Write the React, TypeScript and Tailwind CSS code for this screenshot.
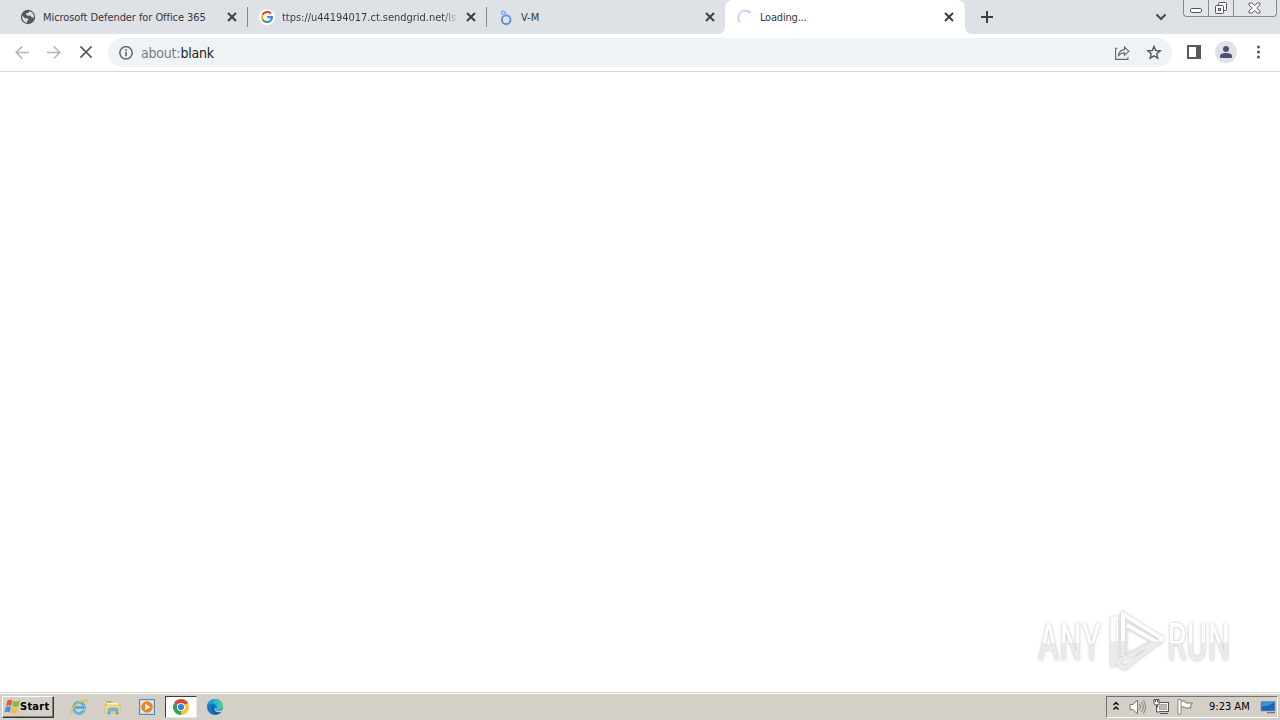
import type { ReactNode } from "react";

function Cross({ size = 10, stroke = 2, color = "#3c4043" }: { size?: number; stroke?: number; color?: string }) {
  return (
    <svg width={size} height={size} viewBox="0 0 10 10" className="shrink-0">
      <path d="M1 1L9 9M9 1L1 9" stroke={color} strokeWidth={stroke} fill="none" />
    </svg>
  );
}

function Globe() {
  return (
    <svg width="16" height="16" viewBox="0 0 16 16">
      <circle cx="8" cy="8" r="7.2" fill="#565a60" />
      <path d="M2.2 6.5L5 9.2l2.6.4 1 1.2-1.6 1.3v1.7C4 13.4 2 10.8 2.2 6.5zM9.5 2.2L8.2 4H6.3v2l1.5.7 2.6-.3 1.2 1.8 2.2.6C14.4 5.7 12.5 3 9.5 2.2z" fill="#dee1e6" />
    </svg>
  );
}

function Google() {
  return (
    <svg width="16" height="16" viewBox="0 0 16 16">
      <circle cx="8" cy="8" r="8" fill="#fff" />
      <g fill="none" strokeWidth="2.1">
        <path d="M11.9 4.6A5 5 0 0 0 3.6 5.8" stroke="#ea4335" />
        <path d="M3.6 5.7A5 5 0 0 0 3.7 10.5" stroke="#fbbc05" />
        <path d="M3.6 10.4A5 5 0 0 0 11.3 11.8" stroke="#34a853" />
        <path d="M11.2 11.9A5 5 0 0 0 13 8.1H8.2" stroke="#4285f4" />
      </g>
    </svg>
  );
}

function Rings() {
  return (
    <svg width="16" height="16" viewBox="0 0 16 16" fill="none">
      <circle cx="8.2" cy="10.7" r="4.3" stroke="#5b8ede" strokeWidth="1.9" />
      <circle cx="5" cy="3.8" r="1.7" stroke="#82aae9" strokeWidth="1.2" />
      <path d="M6.7 3.5Q8.8 4.2 8.5 6.5" stroke="#82aae9" strokeWidth="1.1" />
    </svg>
  );
}

function Spinner() {
  return (
    <svg width="16" height="16" viewBox="0 0 16 16" fill="none">
      <path d="M2.9 13.4A7 7 0 1 1 13.7 4.2" stroke="#c3d3f3" strokeWidth="1.8" />
    </svg>
  );
}

function Tab({ icon, children, active = false, divider = false }: { icon: ReactNode; children: ReactNode; active?: boolean; divider?: boolean }) {
  return (
    <div className={active ? "relative flex h-[34px] w-[240px] items-center rounded-t-[8px] bg-white pl-3" : "relative flex h-[34px] w-[239px] items-center pl-3"}>
      <span className="h-4 w-4 shrink-0">{icon}</span>
      <span className="ml-[7px] w-[175px] overflow-hidden whitespace-nowrap pt-px text-[11px] leading-4 text-[#35383c]">{children}</span>
      <span className="ml-[9px] flex"><Cross /></span>
      {divider && <span className="absolute right-[-1px] top-[7px] h-5 w-px bg-[#85898f]" />}
      {active && (
        <>
          <svg className="absolute bottom-0 left-[-8px]" width="8" height="8"><path d="M8 0V8H0Q8 8 8 0" fill="#fff" /></svg>
          <svg className="absolute bottom-0 right-[-8px]" width="8" height="8"><path d="M0 0V8H8Q0 8 0 0" fill="#fff" /></svg>
        </>
      )}
    </div>
  );
}

function WindowButtons() {
  return (
    <div className="flex h-[17px] w-[94px] rounded-b-[4px] border border-t-0 border-[#858990] bg-[#e2e5ea]">
      <div className="flex w-[25px] justify-center border-r border-[#858990] pt-[8px]">
        <svg width="12" height="5"><rect x=".5" y=".5" width="11" height="4" rx="1.2" fill="#fff" stroke="#53565c" /></svg>
      </div>
      <div className="flex w-[25px] justify-center border-r border-[#858990] pt-[1px]">
        <svg width="14" height="14" viewBox="0 0 14 14" fill="#f5f6f7" stroke="#53565c">
          <rect x="4.5" y="1.5" width="8" height="8" rx="1" />
          <rect x="1.5" y="4.5" width="8" height="8" rx="1" />
          <rect x="4.5" y="7.5" width="2" height="2" />
        </svg>
      </div>
      <div className="flex flex-1 justify-center pr-[2px] pt-[2px]">
        <svg width="13" height="12" viewBox="0 0 13 12"><path d="M1 1h3l2.5 2.7L9 1h3v2L8.7 6 12 9v2H9L6.5 8.3 4 11H1V9l3.3-3L1 3z" fill="#fff" stroke="#5e6167" /></svg>
      </div>
    </div>
  );
}

function TabStrip() {
  return (
    <header className="flex h-[34px] bg-[#dee1e6] pl-2">
      <Tab icon={<Globe />} divider><span className="tracking-[-0.07px]">Microsoft Defender for Office 365</span></Tab>
      <Tab icon={<Google />} divider>
        <span className="bg-gradient-to-r from-[#35383c] from-[160px] to-[#c8cbd0] to-[175px] bg-clip-text tracking-[-0.03px] text-transparent">ttps://u44194017.ct.sendgrid.net/ls</span>
      </Tab>
      <Tab icon={<Rings />}>V-M</Tab>
      <Tab icon={<Spinner />} active><span className="tracking-[-0.2px]">Loading...</span></Tab>
      <svg className="ml-4 mt-[11px]" width="12" height="12"><path d="M6 0V12M0 6H12" stroke="#3c4043" strokeWidth="2" /></svg>
      <div className="flex-1" />
      <svg className="mr-[17px] mt-[13px]" width="11" height="8"><path d="M1.5 1.5L6 6 10.5 1.5" fill="none" stroke="#44484d" strokeWidth="2" /></svg>
      <WindowButtons />
      <div className="w-[3px]" />
    </header>
  );
}

function Arrow({ flip = false }: { flip?: boolean }) {
  return (
    <svg width="14" height="14" viewBox="0 0 14 14" className={flip ? "-scale-x-100" : ""}>
      <path d="M14 6.5H1.5M7.2 .5L1.2 6.5l6 6" fill="none" stroke="#b5b7ba" strokeWidth="1.7" />
    </svg>
  );
}

function Toolbar() {
  return (
    <div className="flex h-[38px] items-center border-b border-[#d5d7da] bg-white pl-[15px] pr-[14px]">
      <Arrow />
      <span className="ml-[18px]"><Arrow flip /></span>
      <span className="ml-[18px] pb-px"><Cross size={14} stroke={1.2} color="#55595e" /></span>
      <div className="ml-[15px] flex h-[29px] w-[1064px] items-center rounded-full bg-[#f0f3f5] pl-[11px] pr-[10px]">
        <svg width="14" height="14" viewBox="0 0 14 14"><circle cx="7" cy="6.8" r="6.2" fill="none" stroke="#5f6368" strokeWidth="1.5" /><path d="M7 6V10.3M7 3.3V4.9" stroke="#5f6368" strokeWidth="1.6" /></svg>
        <span className="ml-2 flex-1 text-[14px] leading-5 tracking-[-0.2px] text-[#777b80]">about:<span className="text-[#202124]">blank</span></span>
        <svg width="16" height="16" viewBox="0 0 16 16" fill="none" stroke="#63676c" strokeWidth="1.1">
          <path d="M3.5 3.2H1.6v11.2h12.3v-2.4" />
          <path d="M4.5 10.5C5 7 7.2 4.8 10.500 4.600V2.100L14.800 6.200 10.500 10.300V7.900C8 7.800 6.200 8.700 4.500 10.500z" />
        </svg>
        <svg className="ml-4" width="16" height="16" viewBox="0 0 16 16"><path d="M8 1.400l1.700 4.100 4.500.4-3.400 2.900 1 4.400L8 10.900l-3.800 2.300 1-4.400-3.400-2.900 4.500-.4z" fill="none" stroke="#55595e" strokeWidth="1.4" /></svg>
      </div>
      <svg className="mb-px ml-[15px]" width="14" height="14"><rect x="1" y="1" width="12" height="12" fill="#fff" stroke="#55585c" strokeWidth="2" /><rect x="9" width="5" height="14" fill="#55585c" /></svg>
      <svg className="mb-px ml-[14px]" width="22" height="22" viewBox="0 0 22 22"><circle cx="11" cy="11" r="11" fill="#dee1e6" /><circle cx="11" cy="8" r="3" fill="#49536d" /><path d="M5 16v-1.300C5 12.700 9 12 11 12s6 .7 6 2.700V16q0 1-1 1H6q-1 0-1-1" fill="#49536d" /></svg>
      <svg className="mb-px ml-[19px]" width="4" height="14" fill="#55595e"><circle cx="2.5" cy="2" r="1.5" /><circle cx="2.5" cy="7" r="1.5" /><circle cx="2.5" cy="12" r="1.5" /></svg>
    </div>
  );
}

function Watermark() {
  return (
    <div className="absolute left-[1036px] top-[607px] h-[68px] w-[200px] font-['Roboto',sans-serif] text-[51px] leading-[68px] drop-shadow-[0_0_1.5px_#bdbdbd]">
      <span className="absolute left-[2px] top-[1.5px] origin-left scale-x-[0.725] whitespace-nowrap bg-gradient-to-b from-white from-50% to-[#ebebeb] to-50% bg-clip-text text-transparent">ANY</span>
      <svg className="absolute left-[72px] top-px" width="58" height="68" viewBox="0 0 58 68">
        <defs>
          <linearGradient id="play-fill" gradientUnits="userSpaceOnUse" x1="0" y1="0" x2="0" y2="68">
            <stop offset=".48" stopColor="#fff" /><stop offset=".48" stopColor="#ebebeb" />
          </linearGradient>
        </defs>
        <path d="M4 10.500h4v44L46 34.500" fill="none" stroke="url(#play-fill)" strokeWidth="4" />
        <path d="M4.500 9v50" fill="none" stroke="url(#play-fill)" strokeWidth="4" />
        <path d="M15 48V6L54 30.500 51 35 19 17" fill="none" stroke="url(#play-fill)" strokeWidth="4" />
        <path d="M54 31L17 60l-7-4" fill="none" stroke="url(#play-fill)" strokeWidth="4" />
        <path d="M8 12v43M12.500 4v45M17.500 12L51 33M19 21v25L43 34z" fill="none" stroke="#e2e2e2" strokeWidth=".8" />
      </svg>
      <span className="absolute left-[131px] top-[1.500px] origin-left scale-x-[0.725] whitespace-nowrap bg-gradient-to-b from-white from-50% to-[#ebebeb] to-50% bg-clip-text text-transparent">RUN</span>
    </div>
  );
}

function WindowsFlag() {
  return (
    <svg width="17" height="17" viewBox="0 0 17 17" className="shrink-0">
      <path d="M3.5 2.5Q6 .8 8.500 2.500L7.200 8Q4.800 6.400 2 8z" fill="#e5602a" />
      <path d="M9.500 3Q12.500 4.500 16 2.300L14.500 8Q11.500 9.800 8.300 8.200z" fill="#84b847" />
      <path d="M1.800 9Q4.500 7.500 7 9.200L5.700 14.500Q3.200 12.800.4 14.500z" fill="#4e8ed4" />
      <path d="M8 9.500Q11 11 14.200 9l-1.500 5.700Q9.800 16.500 6.700 14.800z" fill="#f4be38" />
    </svg>
  );
}

function IEIcon() {
  return (
    <svg width="18" height="18" viewBox="0 0 18 18" fill="none">
      <path d="M14.200 12.100A5.500 5.500 0 1 1 14.600 9.500H5" stroke="#40a8df" strokeWidth="2.7" />
      <path d="M14.200 12.100A5.500 5.500 0 1 1 14.600 9.500" stroke="#83cff0" strokeWidth=".8" />
      <path d="M2.700 15.500C-.5 15 3 8.500 8 5s10-4.600 8.200-.6" stroke="#edbd3c" strokeWidth="1.5" />
    </svg>
  );
}

function FolderIcon() {
  return (
    <svg width="18" height="18" viewBox="0 0 18 18">
      <path d="M2 3h6l1 2h7v10H2z" fill="#e5bd55" />
      <path d="M3 5h12v8H3z" fill="#fff6c9" />
      <path d="M1 7h15v8H1z" fill="#f6dc83" stroke="#d4ae57" strokeWidth=".6" />
      <path d="M4 16v-4q0-2 2-2h6q2 0 2 2v4h-2v-3H6v3z" fill="#75bde4" stroke="#458eb9" strokeWidth=".5" />
      <path d="M4 4h3" stroke="#59a9bc" />
    </svg>
  );
}

function MediaIcon() {
  return (
    <svg width="18" height="18" viewBox="0 0 18 18">
      <rect x="1.5" y="1.5" width="15" height="15" fill="#b7d7ed" stroke="#5a8db2" />
      <rect x="3" y="3" width="12" height="12" fill="#dcecf5" />
      <circle cx="9" cy="9" r="5.8" fill="#ef8519" />
      <path d="M7.200 5.700v6.600L12.500 9z" fill="#fff" />
    </svg>
  );
}

function ChromeIcon() {
  return (
    <svg width="18" height="18" viewBox="0 0 18 18">
      <path d="M9 9L2.070 5A8 8 0 0 1 15.930 5z" fill="#df4637" />
      <path d="M9 9L15.930 5A8 8 0 0 1 9 17z" fill="#f8c633" />
      <path d="M9 9V17A8 8 0 0 1 2.070 5z" fill="#30a452" />
      <path d="M9 5h6.930" stroke="#df4637" strokeWidth="1" />
      <circle cx="9" cy="9" r="4.1" fill="#fff" /><circle cx="9" cy="9" r="3.1" fill="#3c7ce7" />
    </svg>
  );
}

function EdgeIcon() {
  return (
    <svg width="18" height="18" viewBox="0 0 18 18">
      <defs><linearGradient id="edge-top"><stop stopColor="#158ce0" /><stop offset=".6" stopColor="#2cbfd0" /><stop offset="1" stopColor="#66d468" /></linearGradient></defs>
      <circle cx="9" cy="9" r="8" fill="#1377cb" />
      <path d="M1 8.500C1.500 4 5 1 9 1c4.800 0 8 3.200 8 6.800 0 3-2.500 4.500-5 4.500-2 0-2.700-.8-1.700-2C12 8 9.500 5.500 6.500 5.500 4 5.500 1.800 6.700 1 8.500z" fill="url(#edge-top)" />
      <path d="M7.200 7C4.500 9 6 14.500 10 16.500c2.500-.5 4.500-1.800 5.500-3.500-2.500 1.300-6 .7-7.300-1.700-.9-1.700-.3-3-1-4.300z" fill="#1559a3" />
      <path d="M9.800 9.700c-1.300 1.800.3 3 2.500 3 2 0 3.500-.5 4.700-1.500v2l-1.500.6c-2.500.6-5.500.5-6.700-1.400-.7-1.200-.1-2.500 1-2.700z" fill="#d4d0c8" />
    </svg>
  );
}

function Tray() {
  return (
    <div className="flex h-[22px] w-[172px] items-center border border-[#77746e] border-b-white border-r-white pl-[5px]">
      <svg width="8" height="12" viewBox="0 0 8 12" fill="none" stroke="#111" strokeWidth="1.5"><path d="M1.500 4L4 1.500 6.500 4M1.500 8.500L4 6l2.500 2.500" /></svg>
      <svg className="ml-[9px]" width="17" height="16" viewBox="0 0 17 16" fill="none" stroke="#777571">
        <path d="M1 5.500h3L8.500 1v14L4 10.500H1z" fill="#fafafa" />
        <path d="M10.500 5q2 3 0 6M12.500 3q3.500 5 0 10M14.500 1.500q4 6.500 0 13" strokeWidth=".9" />
      </svg>
      <svg className="ml-[7px]" width="17" height="17" viewBox="0 0 17 17" fill="none" stroke="#55534f">
        <rect x="4.5" y="4.5" width="11" height="9" fill="#f7f7f7" /><rect x="6.5" y="6.5" width="7" height="5" fill="#bdbbb6" stroke="#aaa" />
        <path d="M7 15.500h8" /><path d="M1 1.500h5v4q0 1.500-2.500 1.500T1 5.500zM3.500 7v7h3" fill="#f7f7f7" /><path d="M2.500 1v3M4.500 1v3" />
      </svg>
      <svg className="ml-[7px]" width="17" height="17" viewBox="0 0 17 17"><path d="M2.500 2v14M3 3h5l1 2h6.500l-2 2.700L14 10H8.500l-1-1H3" fill="#fafafa" stroke="#777571" /><path d="M1 1.500h3V16H1z" fill="#fff" stroke="#777571" strokeWidth=".8" /></svg>
      <span className="ml-[15px] w-[42px] whitespace-nowrap pt-px text-[11px] leading-4 text-black">9:23 AM</span>
      <svg className="ml-[9px]" width="16" height="15" viewBox="0 0 16 15"><path d="M1 2.500h14v9.500H1z" fill="#1767bb" stroke="#8197ac" strokeWidth=".7" /><path d="M1.500 7.500Q9 7.500 14.500 3v-.2h-13z" fill="#3c91db" /><path d="M7 13.200h8v1H7z" fill="#56616c" /></svg>
    </div>
  );
}

function Taskbar() {
  return (
    <footer className="flex h-7 items-center border-t border-[#d4d0c8] bg-[#d4d0c8] pl-[2px] pr-[2px] shadow-[inset_0_1px_white]">
      <button className="flex h-[22px] w-[52px] items-center whitespace-nowrap border border-b-[#37352f] border-l-white border-r-[#37352f] border-t-white pl-[1px] text-[11px] font-bold leading-4 tracking-[0.25px] text-black shadow-[inset_-1px_-1px_#858078]"><WindowsFlag /><span className="-ml-px pt-px">Start</span></button>
      <div className="ml-2 flex items-center">
        <span className="flex w-[34px] justify-center"><IEIcon /></span>
        <span className="flex w-[34px] justify-center"><FolderIcon /></span>
        <span className="flex w-[34px] justify-center"><MediaIcon /></span>
        <span className="mx-px flex h-[22px] w-[32px] items-center justify-center border border-b-[#e9e7e2] border-l-[#3f3d39] border-r-[#e9e7e2] border-t-[#3f3d39] bg-white"><ChromeIcon /></span>
        <span className="flex w-[34px] justify-center"><EdgeIcon /></span>
      </div>
      <div className="flex-1" />
      <Tray />
    </footer>
  );
}

export default function App() {
  return (
    <div className="relative flex h-[720px] w-[1280px] flex-col overflow-hidden bg-white font-['DejaVu_Sans_Condensed','DejaVu_Sans',sans-serif] [font-stretch:condensed]">
      <TabStrip />
      <Toolbar />
      <main className="flex-1" />
      <Watermark />
      <Taskbar />
    </div>
  );
}
